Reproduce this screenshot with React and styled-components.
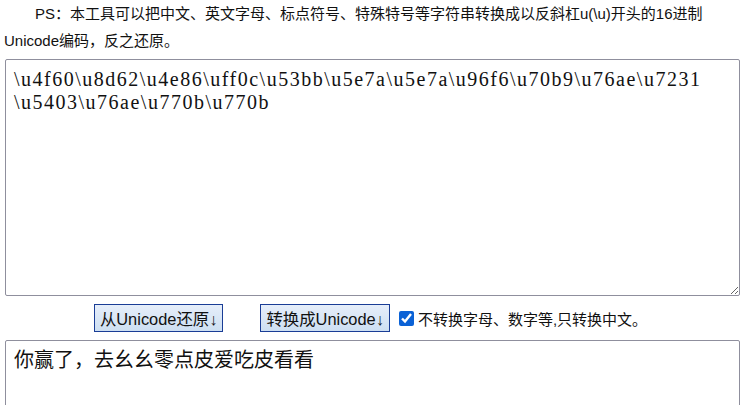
import React, { useState } from 'react';
import styled, { createGlobalStyle } from 'styled-components';

const GlobalStyle = createGlobalStyle`
  body {
    margin: 0;
    background: #fff;
    font-family: 'Liberation Sans', 'Noto Sans CJK SC', sans-serif;
  }
`;

const Page = styled.div`
  padding: 0 3px 0 5px;
`;

const Intro = styled.p`
  margin: 0 0 0 -1px;
  font-size: 15px;
  line-height: 27px;
  text-indent: 31px;
  color: #111;
`;

const CodeArea = styled.textarea`
  display: block;
  box-sizing: border-box;
  width: 735px;
  height: ${p => p.$height}px;
  margin-top: ${p => p.$top}px;
  padding: 8px;
  border: 1px solid #8f8f9d;
  border-radius: 2px;
  font-family: 'Liberation Serif', 'Noto Sans CJK SC', serif;
  font-size: 20px;
  line-height: 23px;
  letter-spacing: ${p => p.$spacing || 0}px;
  color: #111;
  resize: both;
  outline: none;
`;

const ActionRow = styled.div`
  display: flex;
  align-items: center;
  justify-content: center;
  margin-top: 8px;
  height: 28px;
  padding-right: 4px;
`;

const ActionButton = styled.button`
  box-sizing: border-box;
  height: 28px;
  padding: 0 5px;
  margin-right: ${p => p.$gap}px;
  border: 1px solid #1a3d96;
  background: linear-gradient(#e6eefa, #cddff2);
  font-family: 'Liberation Sans', 'Noto Sans CJK SC', sans-serif;
  font-size: 16.4px;
  color: #111;
  cursor: pointer;
`;

const Option = styled.label`
  display: flex;
  align-items: center;
  gap: 4px;
  font-size: 15px;
  color: #111;
`;

const Check = styled.input`
  width: 15px;
  height: 15px;
  margin: 0;
  accent-color: #0b62d6;
`;

const App = () => {
  const [source, setSource] = useState(
    '\\u4f60\\u8d62\\u4e86\\uff0c\\u53bb\\u5e7a\\u5e7a\\u96f6\\u70b9\\u76ae\\u7231\n\\u5403\\u76ae\\u770b\\u770b'
  );
  const [result, setResult] = useState('你赢了，去幺幺零点皮爱吃皮看看');
  const [onlyChinese, setOnlyChinese] = useState(true);

  return (
    <Page>
      <GlobalStyle />
      <Intro>
        PS：本工具可以把中文、英文字母、标点符号、特殊特号等字符串转换成以反斜杠u(\u)开头的16进制Unicode编码，反之还原。
      </Intro>
      <CodeArea
        $top={5}
        $height={237}
        $spacing={1.5}
        value={source}
        onChange={e => setSource(e.target.value)}
      />
      <ActionRow>
        <ActionButton $gap={37}>从Unicode还原↓</ActionButton>
        <ActionButton $gap={9}>转换成Unicode↓</ActionButton>
        <Option>
          <Check
            type="checkbox"
            checked={onlyChinese}
            onChange={e => setOnlyChinese(e.target.checked)}
          />
          不转换字母、数字等,只转换中文。
        </Option>
      </ActionRow>
      <CodeArea
        $top={8}
        $height={120}
        value={result}
        onChange={e => setResult(e.target.value)}
      />
    </Page>
  );
};

export default App;
